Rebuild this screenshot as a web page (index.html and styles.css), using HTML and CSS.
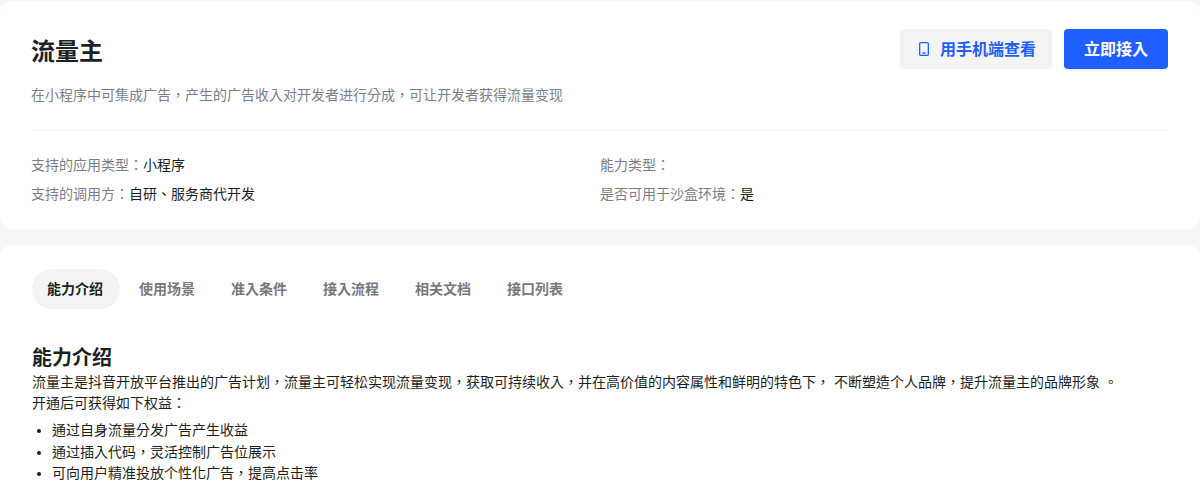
FILE: index.html
```html
<!DOCTYPE html>
<html lang="zh-TW">
<head>
  <meta charset="UTF-8">
  <title>流量主</title>
  <link rel="stylesheet" href="styles.css">
</head>
<body>
  <section class="card head-card">
    <div class="head-top">
      <div class="head-info">
        <h1>流量主</h1>
        <p class="desc">在小程序中可集成广告，产生的广告收入对开发者进行分成，可让开发者获得流量变现</p>
      </div>
      <div class="head-btns">
        <button class="btn btn-light">
          <svg class="phone-icon" width="10" height="14" viewBox="0 0 10 14" fill="none" stroke="#1f5eff" stroke-width="1.3">
            <rect x="0.65" y="0.65" width="8.7" height="12.7" rx="1.2"/>
            <path d="M3.2 11h3.6"/>
          </svg>
          用手机端查看
        </button>
        <button class="btn btn-primary">立即接入</button>
      </div>
    </div>
    <div class="meta">
      <div class="meta-item"><span class="meta-label">支持的应用类型：</span>小程序</div>
      <div class="meta-item"><span class="meta-label">能力类型：</span></div>
      <div class="meta-item"><span class="meta-label">支持的调用方：</span>自研、服务商代开发</div>
      <div class="meta-item"><span class="meta-label">是否可用于沙盒环境：</span>是</div>
    </div>
  </section>

  <section class="card body-card">
    <nav class="tabs">
      <a class="tab active">能力介绍</a>
      <a class="tab">使用场景</a>
      <a class="tab">准入条件</a>
      <a class="tab">接入流程</a>
      <a class="tab">相关文档</a>
      <a class="tab">接口列表</a>
    </nav>
    <div class="doc">
      <h2>能力介绍</h2>
      <p>流量主是抖音开放平台推出的广告计划，流量主可轻松实现流量变现，获取可持续收入，并在高价值的内容属性和鲜明的特色下， 不断塑造个人品牌，提升流量主的品牌形象 。</p>
      <p>开通后可获得如下权益：</p>
      <ul>
        <li>通过自身流量分发广告产生收益</li>
        <li>通过插入代码，灵活控制广告位展示</li>
        <li>可向用户精准投放个性化广告，提高点击率</li>
      </ul>
    </div>
  </section>
</body>
</html>
```

FILE: styles.css
```css
/* Page */
html, body {
  height: 493px;
  overflow: hidden;
}

body {
  margin: 0;
  padding-top: 1px;
  box-sizing: border-box;
  background: #f6f7f7;
  color: #1c1f23;
  font-family: "Liberation Sans", "Noto Sans CJK TC", sans-serif;
  font-size: 14px;
}

.card {
  background: #fff;
  border-radius: 12px;
  padding: 0 32px;
}

/* Header card */
.head-card {
  height: 228px;
  margin-bottom: 16px;
  box-sizing: border-box;
}

.head-top {
  display: flex;
  justify-content: space-between;
  align-items: flex-start;
  height: 129px;
  border-bottom: 1px solid #f3f4f4;
}

.head-info {
  margin-left: -1px;
}

h1 {
  margin: 33px 0 0;
  font-size: 24px;
  line-height: 36px;
  font-weight: 700;
}

.desc {
  margin: 15px 0 0;
  line-height: 20px;
  color: #7b7f85;
}

.head-btns {
  display: flex;
  gap: 12px;
  margin-top: 28px;
}

.btn {
  height: 40px;
  padding: 0 0 2px;
  border: none;
  border-radius: 4px;
  font-family: inherit;
  font-size: 16px;
  font-weight: 700;
  cursor: pointer;
}

.btn-light {
  width: 152px;
  background: #f3f5f5;
  color: #1f5eff;
  display: flex;
  align-items: center;
  justify-content: center;
  gap: 11px;
}

.phone-icon {
  margin: 2px 0 0 3px;
}

.btn-primary {
  width: 104px;
  background: #1f5eff;
  color: #fff;
}

.meta {
  display: grid;
  grid-template-columns: 569px 1fr;
  row-gap: 9px;
  margin-left: -1px;
  padding-top: 24px;
  line-height: 20px;
}

.meta-label {
  color: #7b7f85;
}

/* Body card */
.body-card {
  height: 260px;
  box-sizing: border-box;
  padding-top: 24px;
}

.tabs {
  display: flex;
  gap: 4px;
}

.tab {
  padding: 0 17px 0 15px;
  height: 40px;
  line-height: 40px;
  border-radius: 20px;
  font-size: 14px;
  font-weight: 700;
  color: #77787c;
}

.tab.active {
  background: #f3f5f5;
  color: #1c1f23;
}

.doc {
  margin-top: 35px;
  line-height: 21px;
}

h2 {
  margin: 0;
  font-size: 20px;
  line-height: 28px;
  font-weight: 700;
}

.doc p {
  margin: 0;
}

.doc ul {
  margin: 6px 0 0;
  padding-left: 20px;
}

.doc li {
  line-height: 21.5px;
}
```
